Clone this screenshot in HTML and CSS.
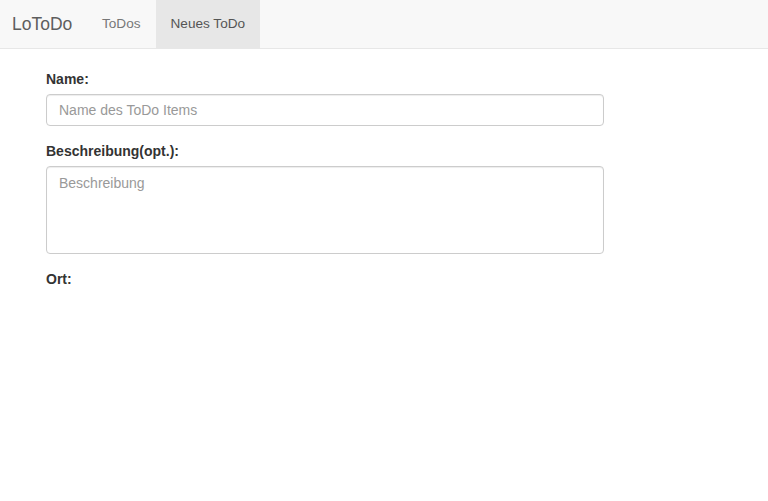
FILE: index.html
```html
<!DOCTYPE html>
<html lang="de">
<head>
<meta charset="utf-8">
<title>LoToDo</title>
<link rel="stylesheet" href="styles.css">
</head>
<body>
<nav class="navbar">
  <a class="brand" href="#">LoToDo</a>
  <ul class="nav">
    <li><a href="#">ToDos</a></li>
    <li class="active"><a href="#">Neues ToDo</a></li>
  </ul>
</nav>
<main class="content">
  <form class="form">
    <div class="form-group">
      <label class="label" for="name">Name:</label>
      <input class="control" id="name" type="text" placeholder="Name des ToDo Items">
    </div>
    <div class="form-group">
      <label class="label" for="desc">Beschreibung(opt.):</label>
      <textarea class="control area" id="desc" placeholder="Beschreibung"></textarea>
    </div>
    <div class="form-group">
      <label class="label">Ort:</label>
    </div>
  </form>
</main>
</body>
</html>
```
FILE: styles.css
```css
* { box-sizing: border-box; }
html, body { margin: 0; padding: 0; background: #fff; }
body {
  font-family: "Liberation Sans", Arial, sans-serif;
  font-size: 14px;
  line-height: 20px;
  color: #333;
}
.navbar {
  display: flex;
  align-items: stretch;
  height: 49px;
  background: #f8f8f8;
  border-bottom: 1px solid #e7e7e7;
}
.brand {
  display: flex;
  align-items: center;
  width: 87px;
  padding: 0 0 0 12px;
  font-size: 17.5px;
  color: #5e5e5e;
  text-decoration: none;
}
.nav {
  display: flex;
  margin: 0;
  padding: 0;
  list-style: none;
  font-size: 13.6px;
}
.nav li { display: flex; }
.nav a {
  display: flex;
  align-items: center;
  padding: 0 15px;
  color: #777;
  text-decoration: none;
}
.nav .active a {
  background: #e7e7e7;
  color: #555;
}
.content {
  padding: 20px 0 0 46px;
}
.form { width: 558px; }
.form-group { margin-bottom: 15px; }
.label {
  display: block;
  font-weight: bold;
  margin-bottom: 5px;
}
.control {
  display: block;
  width: 100%;
  height: 32px;
  padding: 5px 12px;
  font-family: inherit;
  font-size: 14px;
  line-height: 20px;
  color: #555;
  background: #fff;
  border: 1px solid #ccc;
  border-radius: 4px;
  box-shadow: inset 0 1px 1px rgba(0,0,0,.075);
  outline: none;
}
.control::placeholder { color: #999; }
.area {
  height: 88px;
  resize: none;
  padding-top: 6px;
}
```
